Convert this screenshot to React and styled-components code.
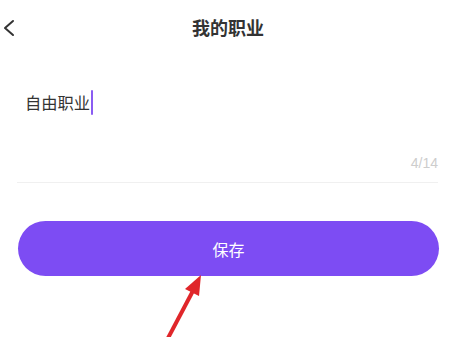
import React from 'react'
import styled, { createGlobalStyle } from 'styled-components'

const GlobalStyle = createGlobalStyle`
  html, body {
    margin: 0;
    padding: 0;
    background: #fff;
  }
  body {
    font-family: "Noto Sans CJK SC", "Noto Sans", sans-serif;
    overflow: hidden;
  }
`

const Page = styled.div`
  position: relative;
  width: 458px;
  height: 337px;
  background: #fff;
`

const Header = styled.div`
  display: grid;
  grid-template-columns: 1fr auto 1fr;
  align-items: center;
  height: 56px;
`

const BackButton = styled.button`
  justify-self: start;
  display: flex;
  align-items: center;
  background: none;
  border: none;
  padding: 0 0 0 2px;
  margin-top: -1px;
  cursor: pointer;
`

const Title = styled.div`
  font-size: 18px;
  font-weight: 600;
  color: #333;
  line-height: 24px;
  margin-top: -2px;
  margin-right: 2px;
`

const Field = styled.div`
  margin: 0 20px 0 17px;
  padding: 34px 0 11px 8px;
  border-bottom: 1px solid #f0f0f0;
  display: flex;
  flex-direction: column;
`

const InputLine = styled.div`
  display: flex;
  align-items: center;
  height: 24px;
  font-size: 16.3px;
  color: #333;
`

const Caret = styled.span`
  display: inline-block;
  width: 2px;
  height: 25px;
  margin-left: 1px;
  background: #8a5cf2;
  border-radius: 1px;
`

const Counter = styled.div`
  align-self: flex-end;
  margin-top: 41px;
  font-size: 14px;
  line-height: 16px;
  color: #cdcdcd;
  font-family: "Liberation Sans", Arial, sans-serif;
`

const SaveButton = styled.button`
  display: flex;
  align-items: center;
  justify-content: center;
  margin: 38px 19px 0 18px;
  width: calc(100% - 37px);
  height: 55px;
  border: none;
  border-radius: 28px;
  background: #7d4cf3;
  color: #fff;
  font-size: 16px;
  font-family: "Noto Sans CJK SC", "Noto Sans", sans-serif;
  cursor: pointer;
`

const Annotation = styled.svg`
  position: absolute;
  left: 0;
  top: 0;
  pointer-events: none;
`

export default function App() {
  return (
    <Page>
      <GlobalStyle />
      <Header>
        <BackButton aria-label="返回">
          <svg width="14" height="20" viewBox="0 0 14 20">
            <path d="M11 3 L3 10 L11 17" fill="none" stroke="#333" strokeWidth="2" strokeLinecap="round" strokeLinejoin="round" />
          </svg>
        </BackButton>
        <Title>我的职业</Title>
        <div />
      </Header>
      <Field>
        <InputLine>
          自由职业<Caret />
        </InputLine>
        <Counter>4/14</Counter>
      </Field>
      <SaveButton>保存</SaveButton>
      <Annotation width="458" height="337" viewBox="0 0 458 337">
        <line x1="167" y1="340" x2="195" y2="287" stroke="#e0262a" strokeWidth="4" />
        <polygon points="201,275 199,296 185,289" fill="#e0262a" />
      </Annotation>
    </Page>
  )
}
